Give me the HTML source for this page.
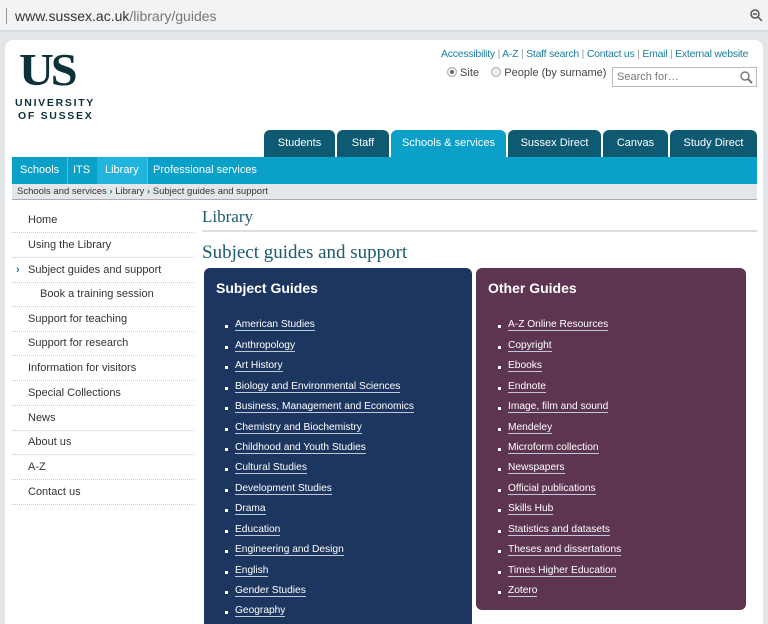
<!DOCTYPE html>
<html><head><meta charset="utf-8"><style>
*{margin:0;padding:0;box-sizing:border-box}
html,body{width:768px;height:624px;overflow:hidden}
body{background:#e3e7e9;font-family:"Liberation Sans",Arial,sans-serif;position:relative}
.abs{position:absolute}
#url{left:0;top:0;width:768px;height:32px;background:#f1f3f4;border-bottom:2px solid #d9dcde}
#url span{position:absolute;left:15px;top:8px;font-size:14px;color:#333}
#card{left:5px;top:40px;width:758px;height:584px;background:#fff;border-radius:8px 8px 0 0}
.top a{color:#1a7d9e;text-decoration:none}
.tab{position:absolute;top:130px;height:27px;background:#0e5a73;color:#fff;font-size:11px;text-align:center;line-height:27px;border-radius:6px 6px 0 0}
.bar{left:12px;top:157px;width:745px;height:27px;background:#0ba0c8}
.bar span{position:absolute;top:0;height:27px;line-height:27px;color:#fff;font-size:11px;border-right:1px solid #4cc0e0;padding:0 8px}
.nav div{position:absolute;left:12px;width:182px;height:24.6px;border-bottom:1px dotted #ccc;font-size:11px;color:#333;padding-left:16px;line-height:24px}
ul{list-style:none}
li{position:absolute;font-size:10.2px;color:#fff;white-space:nowrap}
li u{text-decoration:none;border-bottom:1px solid #c0c8d8}
li:before{content:"";position:absolute;left:-10px;top:6px;width:3px;height:3px;background:#fff}
</style></head><body>
<div id="url" class="abs"><div class="abs" style="left:6px;top:8px;width:1px;height:16px;background:#999"></div><span>www.sussex.ac.uk<span style="position:static;color:#777">/library/guides</span></span>
<svg class="abs" style="left:750px;top:9px" width="13" height="13" viewBox="0 0 13 13"><circle cx="5" cy="5" r="4" fill="none" stroke="#555" stroke-width="1.5"/><path d="M8 8l4 4M3 5h4" stroke="#555" stroke-width="1.5"/></svg></div>
<div id="card" class="abs"></div>
<div class="abs" style="left:19px;top:47px;font-family:'Liberation Serif',serif;font-weight:bold;font-size:46px;color:#0c3138;letter-spacing:-3px;line-height:46px;transform:scaleX(1.05);transform-origin:left">US</div>
<div class="abs" style="left:15px;top:97px;font-size:10.5px;font-weight:bold;color:#0c3138;letter-spacing:1.7px;line-height:13px">UNIVERSITY<br><span style="margin-left:3px">OF SUSSEX</span></div>
<div class="abs top" style="left:441px;top:48px;font-size:10.5px;color:#999;white-space:nowrap;letter-spacing:-0.25px"><a>Accessibility</a> | <a>A-Z</a> | <a>Staff search</a> | <a>Contact us</a> | <a>Email</a> | <a>External website</a></div>
<div class="abs" style="left:447px;top:67px;font-size:11px;color:#444;white-space:nowrap"><span style="display:inline-block;width:10px;height:10px;border-radius:50%;border:1px solid #aaa;background:radial-gradient(#666 30%,#eee 40%);vertical-align:-1px"></span> Site &nbsp;&nbsp; <span style="display:inline-block;width:10px;height:10px;border-radius:50%;border:1px solid #aaa;background:#eee;vertical-align:-1px"></span> People (by surname)</div>
<div class="abs" style="left:612px;top:67px;width:145px;height:20px;border:1px solid #bbb;font-size:11px;color:#777;padding:3px 4px">Search for…
<svg class="abs" style="right:3px;top:3px" width="13" height="13" viewBox="0 0 13 13"><circle cx="5" cy="5" r="4" fill="none" stroke="#777" stroke-width="1.4"/><path d="M8 8l4 4" stroke="#777" stroke-width="2"/></svg></div>
<div class="tab" style="left:264px;width:71px">Students</div>
<div class="tab" style="left:337px;width:52px">Staff</div>
<div class="tab" style="left:391px;width:115px;background:#0ba0c8">Schools &amp; services</div>
<div class="tab" style="left:508px;width:93px">Sussex Direct</div>
<div class="tab" style="left:603px;width:65px">Canvas</div>
<div class="tab" style="left:670px;width:87px">Study Direct</div>
<div class="abs bar"><span style="left:0">Schools</span><span style="left:53px">ITS</span><span style="left:85px;background:#22b4dc">Library</span><span style="left:133px;border:0">Professional services</span></div>
<div class="abs" style="left:12px;top:184px;width:745px;height:16px;background:#e3e7e9;border-bottom:1px solid #aab;font-size:9.5px;color:#333;padding:2px 5px">Schools and services <b style="color:#1a7d9e">›</b> Library <b style="color:#1a7d9e">›</b> Subject guides and support</div>
<div class="nav">
<div style="top:208px">Home</div><div style="top:233px">Using the Library</div>
<div style="top:258px"><b class="abs" style="left:4px;color:#1a7d9e">›</b>Subject guides and support</div>
<div style="top:282px;padding-left:28px">Book a training session</div>
<div style="top:307px">Support for teaching</div><div style="top:331px">Support for research</div>
<div style="top:356px">Information for visitors</div><div style="top:381px">Special Collections</div>
<div style="top:406px">News</div><div style="top:430px">About us</div><div style="top:455px">A-Z</div><div style="top:480px">Contact us</div>
</div>
<div class="abs" style="left:202px;top:207px;width:555px;height:25px;border-bottom:2px solid #ddd;font-family:'Liberation Serif',serif;font-size:17px;color:#1b5a6b">Library</div>
<div class="abs" style="left:202px;top:242px;font-family:'Liberation Serif',serif;font-size:19px;color:#1b5a6b">Subject guides and support</div>
<div class="abs" style="left:204px;top:268px;width:268px;height:356px;background:#1d3660;border-radius:6px 6px 0 0"></div>
<div class="abs" style="left:476px;top:268px;width:270px;height:342px;background:#5e3551;border-radius:6px"></div>
<div class="abs" style="left:216px;top:280px;font-size:14px;font-weight:bold;color:#fff">Subject Guides</div>
<div class="abs" style="left:488px;top:280px;font-size:14px;font-weight:bold;color:#fff">Other Guides</div>
<ul>
<li style="left:235px;top:319px"><u>American Studies</u></li>
<li style="left:235px;top:339.5px"><u>Anthropology</u></li>
<li style="left:235px;top:360px"><u>Art History</u></li>
<li style="left:235px;top:380.5px"><u>Biology and Environmental Sciences</u></li>
<li style="left:235px;top:401px"><u>Business, Management and Economics</u></li>
<li style="left:235px;top:421.5px"><u>Chemistry and Biochemistry</u></li>
<li style="left:235px;top:442px"><u>Childhood and Youth Studies</u></li>
<li style="left:235px;top:462px"><u>Cultural Studies</u></li>
<li style="left:235px;top:482.5px"><u>Development Studies</u></li>
<li style="left:235px;top:503px"><u>Drama</u></li>
<li style="left:235px;top:523.5px"><u>Education</u></li>
<li style="left:235px;top:544px"><u>Engineering and Design</u></li>
<li style="left:235px;top:564.5px"><u>English</u></li>
<li style="left:235px;top:585px"><u>Gender Studies</u></li>
<li style="left:235px;top:605px"><u>Geography</u></li>
<li style="left:508px;top:319px"><u>A-Z Online Resources</u></li>
<li style="left:508px;top:339.5px"><u>Copyright</u></li>
<li style="left:508px;top:360px"><u>Ebooks</u></li>
<li style="left:508px;top:380.5px"><u>Endnote</u></li>
<li style="left:508px;top:401px"><u>Image, film and sound</u></li>
<li style="left:508px;top:421.5px"><u>Mendeley</u></li>
<li style="left:508px;top:442px"><u>Microform collection</u></li>
<li style="left:508px;top:462px"><u>Newspapers</u></li>
<li style="left:508px;top:482.5px"><u>Official publications</u></li>
<li style="left:508px;top:503px"><u>Skills Hub</u></li>
<li style="left:508px;top:523.5px"><u>Statistics and datasets</u></li>
<li style="left:508px;top:544px"><u>Theses and dissertations</u></li>
<li style="left:508px;top:564.5px"><u>Times Higher Education</u></li>
<li style="left:508px;top:585px"><u>Zotero</u></li>
</ul>
</body></html>
